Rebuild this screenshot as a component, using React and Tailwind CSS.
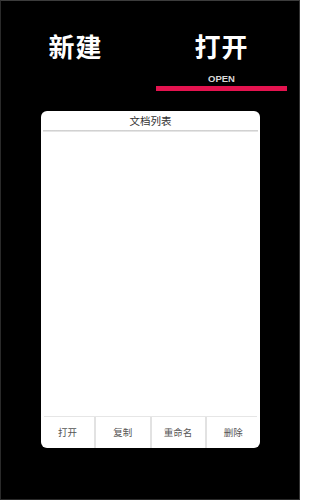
export default function App() {
  const cjk = { fontFamily: '"Noto Sans CJK SC", "Noto Sans", sans-serif' };
  const buttons = ["打开", "复制", "重命名", "删除"];
  return (
    <div className="w-[300px] h-[500px] bg-black border border-[#2a2a2a] border-t-[#3c3c3c] border-r-[#333] flex flex-col overflow-hidden" style={cjk}>
      <div className="flex pt-[28px] h-[110px]">
        <div className="w-[150px] flex justify-center">
          <div className="text-white text-[26px] leading-[34px] font-bold tracking-[1px]">新建</div>
        </div>
        <div className="w-[150px] flex flex-col items-start">
          <div className="w-[131px] ml-[6px] flex flex-col items-center">
            <div className="text-white text-[26px] leading-[34px] font-bold tracking-[1px]">打开</div>
            <div className="text-[#d8d8d8] text-[9.5px] leading-[12px] font-bold mt-[10px]" style={{ fontFamily: '"Liberation Sans", Arial, sans-serif' }}>OPEN</div>
            <div className="w-[131px] h-[5px] bg-[#e4134f] mt-[1px]" />
          </div>
        </div>
      </div>
      <div className="mx-[40px] w-[219px] h-[337px] bg-white rounded-[6px] flex flex-col overflow-hidden">
        <div className="h-[19px] flex items-center justify-center text-[10.5px] text-[#333] pt-[1px]">文档列表</div>
        <div className="h-[2px] mx-[2px] bg-gradient-to-b from-[#c8c8c8] to-[#efefef]" />
        <div className="flex-1" />
        <div className="h-[1px] mx-[3px] bg-[#e6e6e6]" />
        <div className="h-[31px] flex">
          {buttons.map((b, i) => (
            <div key={b} className={`flex-1 flex items-center justify-center text-[9.5px] text-[#555] ${i < 3 ? "border-r-2 border-[#e2e2e2]" : ""}`}>{b}</div>
          ))}
        </div>
      </div>
    </div>
  );
}
